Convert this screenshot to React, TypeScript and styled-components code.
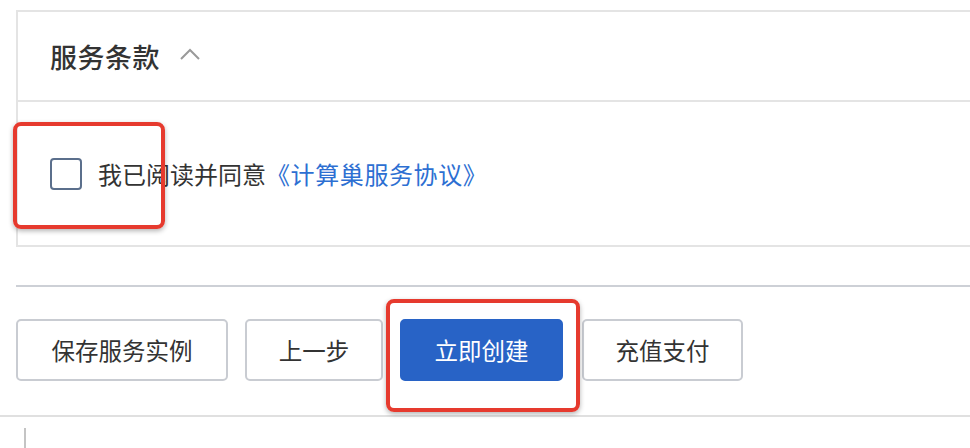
import React from 'react';
import styled, { createGlobalStyle } from 'styled-components';

const GlobalStyle = createGlobalStyle`
  body {
    margin: 0;
    background: #ffffff;
    font-family: 'Noto Sans CJK SC', 'Noto Sans', sans-serif;
    overflow: hidden;
  }
`;

const Page = styled.main`
  width: 970px;
  height: 448px;
  padding-top: 10px;
  box-sizing: border-box;
  overflow: hidden;
`;

const Card = styled.section`
  margin-left: 16px;
  margin-right: -10px;
  border: 2px solid #e4e4e4;
`;

const CardHeader = styled.header`
  height: 88px;
  display: flex;
  align-items: center;
  padding-left: 32px;
  border-bottom: 2px solid #e4e4e4;
  h2 {
    margin: 0;
    font-size: 27px;
    font-weight: 500;
    color: #333333;
    letter-spacing: 0.5px;
  }
`;

const Chevron = styled.svg`
  width: 22px;
  height: 14px;
  margin-left: 19px;
  margin-top: -4px;
`;

const CardBody = styled.div`
  height: 143px;
  display: flex;
  align-items: center;
  padding-left: 32px;
`;

const Mark = styled.span<{ $after?: number }>`
  position: relative;
  display: inline-flex;
  margin-right: ${(p) => p.$after ?? 0}px;
`;

const Highlight = styled.span<{ $top: number; $left: number; $w: number; $h: number }>`
  position: absolute;
  top: ${(p) => p.$top}px;
  left: ${(p) => p.$left}px;
  width: ${(p) => p.$w}px;
  height: ${(p) => p.$h}px;
  border: 4px solid #e63a2e;
  border-radius: 8px;
  box-sizing: border-box;
  box-shadow: 0 2px 5px rgba(0, 0, 0, 0.3);
  pointer-events: none;
`;

const Checkbox = styled.span`
  width: 32px;
  height: 32px;
  box-sizing: border-box;
  border: 2px solid #5b6f8c;
  border-radius: 4px;
  margin-right: 16px;
`;

const Agree = styled.p`
  margin: 0;
  font-size: 24px;
  color: #333333;
  a {
    color: #2d6fd2;
    text-decoration: none;
    letter-spacing: 0.6px;
  }
`;

const Footer = styled.div`
  margin-left: 16px;
  margin-top: 38px;
  border-top: 2px solid #cdd0d6;
  padding-top: 32px;
  display: flex;
  gap: 17px;
`;

const Button = styled.button<{ $primary?: boolean; $w: number }>`
  width: ${(p) => p.$w}px;
  height: 62px;
  padding: 0;
  font-family: inherit;
  font-size: 23.5px;
  border-radius: 5px;
  border: 2px solid ${(p) => (p.$primary ? '#2863c6' : '#c9ccd2')};
  background: ${(p) => (p.$primary ? '#2863c6' : '#ffffff')};
  color: ${(p) => (p.$primary ? '#ffffff' : '#333333')};
  cursor: pointer;
`;

const BottomBar = styled.div`
  margin-top: 34px;
  border-top: 2px solid #e0e0e0;
  padding: 11px 0 0 24px;
`;

const Rule = styled.div`
  width: 2px;
  height: 30px;
  background: #c4c4c4;
`;

export default function App() {
  return (
    <Page>
      <GlobalStyle />
      <Card>
        <CardHeader>
          <h2>服务条款</h2>
          <Chevron viewBox="0 0 22 14">
            <polyline points="2,12 11,3 20,12" fill="none" stroke="#9a9a9a" strokeWidth="2" />
          </Chevron>
        </CardHeader>
        <CardBody>
          <Mark>
            <Checkbox />
            <Highlight $top={-36} $left={-37} $w={152} $h={107} />
          </Mark>
          <Agree>
            我已阅读并同意<a href="#">《计算巢服务协议》</a>
          </Agree>
        </CardBody>
      </Card>
      <Footer>
        <Button $w={212}>保存服务实例</Button>
        <Button $w={138}>上一步</Button>
        <Mark $after={2}>
          <Button $primary $w={163}>立即创建</Button>
          <Highlight $top={-20} $left={-14} $w={194} $h={113} />
        </Mark>
        <Button $w={161}>充值支付</Button>
      </Footer>
      <BottomBar>
        <Rule />
      </BottomBar>
    </Page>
  );
}
